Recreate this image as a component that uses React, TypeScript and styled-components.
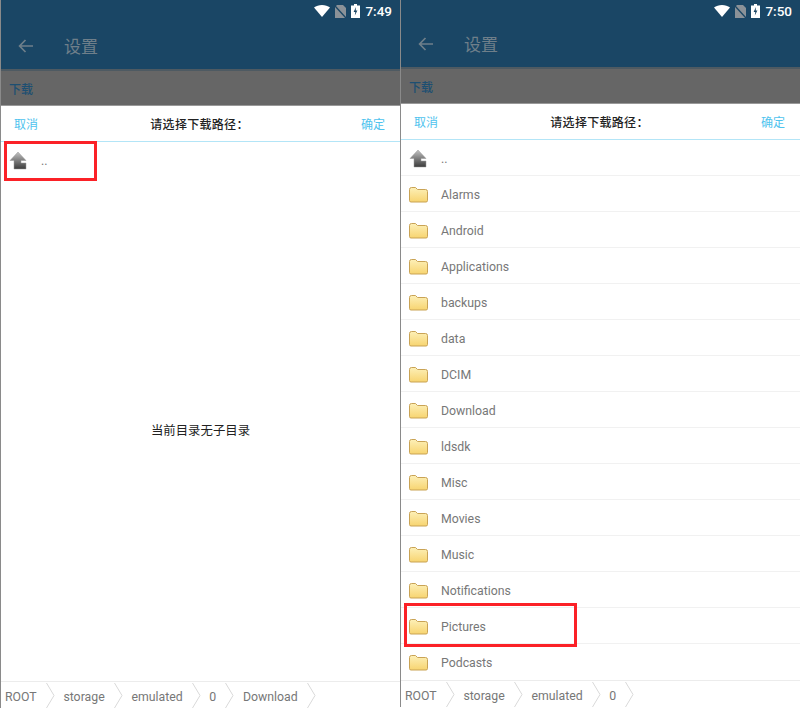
import React from 'react';
import styled, { createGlobalStyle } from 'styled-components';

const GlobalStyle = createGlobalStyle`
  html, body { margin: 0; padding: 0; background: #fff; }
  body { font-family: Roboto, "Noto Sans CJK SC", sans-serif; }
`;

const Page = styled.div`
  display: flex;
  width: 800px;
  height: 709px;
  overflow: hidden;
`;

const Phone = styled.div<{ $h: number }>`
  position: relative;
  display: flex;
  flex-direction: column;
  width: 400px;
  height: ${p => p.$h}px;
  border-left: 1px solid #8a8a8a;
  box-sizing: border-box;
  background: #fff;
`;

const AppBar = styled.div<{ $h: number }>`
  height: ${p => p.$h}px;
  flex: none;
  background: #1a4665;
  display: flex;
  flex-direction: column;
  box-sizing: border-box;
  border-bottom: 2px solid #4e5a62;
`;

const StatusBar = styled.div`
  display: flex;
  justify-content: flex-end;
  align-items: center;
  gap: 5px;
  height: 22px;
  padding-right: 8px;
  color: #fff;
  font-size: 13.5px;
  font-weight: 500;
`;

const TitleRow = styled.div<{ $gap: number }>`
  display: flex;
  align-items: center;
  padding: ${p => p.$gap}px 0 0 17px;
  gap: 30px;
  color: #6f7f8a;
  font-size: 17px;
`;

const SectionBar = styled.div`
  height: 35px;
  flex: none;
  box-sizing: border-box;
  background: #666;
  color: #1d4f72;
  font-size: 12px;
  font-weight: 500;
  display: flex;
  align-items: center;
  padding-left: 8px;
  border-bottom: 1px solid #999;
`;

const DialogHeader = styled.div`
  height: 36px;
  flex: none;
  box-sizing: border-box;
  display: flex;
  align-items: center;
  justify-content: space-between;
  padding: 0 15px 0 13px;
  font-size: 12px;
  border-bottom: 1px solid #b3e5f7;
`;

const Action = styled.span`
  color: #4fc3ee;
`;

const DialogTitle = styled.span`
  color: #222;
  font-weight: 500;
  letter-spacing: 0.3px;
`;

const List = styled.div`
  flex: 1;
  display: flex;
  flex-direction: column;
  min-height: 0;
`;

const Row = styled.div<{ $plain?: boolean }>`
  height: 36px;
  flex: none;
  box-sizing: border-box;
  display: flex;
  align-items: center;
  padding: 2px 0 0 8px;
  gap: 12px;
  color: #777;
  font-size: 12.3px;
  border-bottom: 1px solid ${p => (p.$plain ? 'transparent' : '#f1f1f1')};
`;

const EmptyNote = styled.div`
  flex: 1;
  display: flex;
  align-items: center;
  justify-content: center;
  color: #222;
  font-size: 12.4px;
`;

const Crumbs = styled.div`
  height: 26px;
  flex: none;
  display: flex;
  align-items: center;
  padding-left: 4px;
  border-top: 1px solid #ececec;
  color: #777;
  font-size: 12.3px;
`;

const Crumb = styled.div`
  display: flex;
  align-items: center;
  gap: 9px;
  margin-right: 8.7px;
`;

const CrumbLabel = styled.span`
  padding-top: 3px;
`;

const Highlight = styled.div<{ $x: number; $y: number; $w: number; $h: number }>`
  position: absolute;
  left: ${p => p.$x}px;
  top: ${p => p.$y}px;
  width: ${p => p.$w}px;
  height: ${p => p.$h}px;
  box-sizing: border-box;
  border: 3px solid #fb2127;
`;

const WifiIcon = () => (
  <svg width="16" height="12" viewBox="0 0 16 12">
    <path d="M0 2.6C2 .9 5 0 8 0s6 .9 8 2.6L8 12z" fill="#fff" />
  </svg>
);

const NoSimIcon = () => (
  <svg width="11" height="13" viewBox="0 0 11 13">
    <path d="M2 0h6l3 3v10H0V2z" fill="#8b9298" />
    <path d="M0 1l11 12" stroke="#1a4665" strokeWidth="1.4" />
  </svg>
);

const BatteryIcon = () => (
  <svg width="9" height="14" viewBox="0 0 9 14">
    <path d="M3 0h3v1.5h3V14H0V1.5h3z" fill="#fff" />
    <path d="M5 3L2.6 8h1.7L3.8 11.5 6.4 6.4H4.7z" fill="#1a4665" />
  </svg>
);

const BackIcon = () => (
  <svg width="16" height="14" viewBox="0 0 16 14" fill="none" stroke="#6f7f8a" strokeWidth="1.7">
    <path d="M15 7H2M7.500 1L1.600 7l5.900 6" />
  </svg>
);

const UpIcon = () => (
  <svg width="20" height="20" viewBox="0 0 20 20">
    <defs>
      <linearGradient id="upGrad" x1="0" y1="0" x2="0" y2="1">
        <stop offset="0" stopColor="#c4c4c4" />
        <stop offset="0.55" stopColor="#777" />
        <stop offset="1" stopColor="#3c3c3c" />
      </linearGradient>
    </defs>
    <path d="M9 1L1 9.500H5V18H17V12H12V9.500H17Z" fill="url(#upGrad)" stroke="#999" strokeWidth=".5" />
  </svg>
);

const FolderIcon = () => (
  <svg width="20" height="18" viewBox="0 0 20 18">
    <defs>
      <linearGradient id="folderGrad" x1="0" y1="0" x2="0" y2="1">
        <stop offset="0" stopColor="#fdf0b8" />
        <stop offset="1" stopColor="#f7d470" />
      </linearGradient>
    </defs>
    <path d="M.5 3.500Q.5 1.500 2.500 1.500H6.500L8.500 3.500H16.500Q18.500 3.500 18.500 5.500V14.500Q18.500 16 17 16H2Q.5 16 .5 14.500Z" fill="url(#folderGrad)" stroke="#c9a355" strokeWidth="1" />
  </svg>
);

const Chevron = () => (
  <svg width="9" height="25" viewBox="0 0 9 25" fill="none" stroke="#d9d9d9">
    <path d="M.5 0L8 12.500.5 25" />
  </svg>
);

const folders = ['Alarms', 'Android', 'Applications', 'backups', 'data', 'DCIM', 'Download', 'ldsdk', 'Misc', 'Movies', 'Music', 'Notifications', 'Pictures', 'Podcasts'];

const Header = ({ time, bar, gap }: { time: string; bar: number; gap: number }) => (
  <>
    <AppBar $h={bar}>
      <StatusBar>
        <WifiIcon />
        <NoSimIcon />
        <BatteryIcon />
        {time}
      </StatusBar>
      <TitleRow $gap={gap}>
        <BackIcon />
        设置
      </TitleRow>
    </AppBar>
    <SectionBar>下载</SectionBar>
    <DialogHeader>
      <Action>取消</Action>
      <DialogTitle>请选择下载路径：</DialogTitle>
      <Action>确定</Action>
    </DialogHeader>
  </>
);

const Breadcrumb = ({ items }: { items: string[] }) => (
  <Crumbs>
    {items.map(item => (
      <Crumb key={item}>
        <CrumbLabel>{item}</CrumbLabel>
        <Chevron />
      </Crumb>
    ))}
  </Crumbs>
);

export default function App() {
  return (
    <Page>
      <GlobalStyle />
      <Phone $h={708}>
        <Header time="7:49" bar={71} gap={11} />
        <List>
          <Row $plain>
            <UpIcon />
            ..
          </Row>
          <EmptyNote>当前目录无子目录</EmptyNote>
        </List>
        <Breadcrumb items={['ROOT', 'storage', 'emulated', '0', 'Download']} />
        <Highlight $x={3} $y={141} $w={93} $h={40} />
      </Phone>
      <Phone $h={707}>
        <Header time="7:50" bar={69} gap={9} />
        <List>
          <Row>
            <UpIcon />
            ..
          </Row>
          {folders.map(name => (
            <Row key={name} $plain={name === 'Podcasts'}>
              <FolderIcon />
              {name}
            </Row>
          ))}
        </List>
        <Breadcrumb items={['ROOT', 'storage', 'emulated', '0']} />
        <Highlight $x={3} $y={603} $w={173} $h={44} />
      </Phone>
    </Page>
  );
}
